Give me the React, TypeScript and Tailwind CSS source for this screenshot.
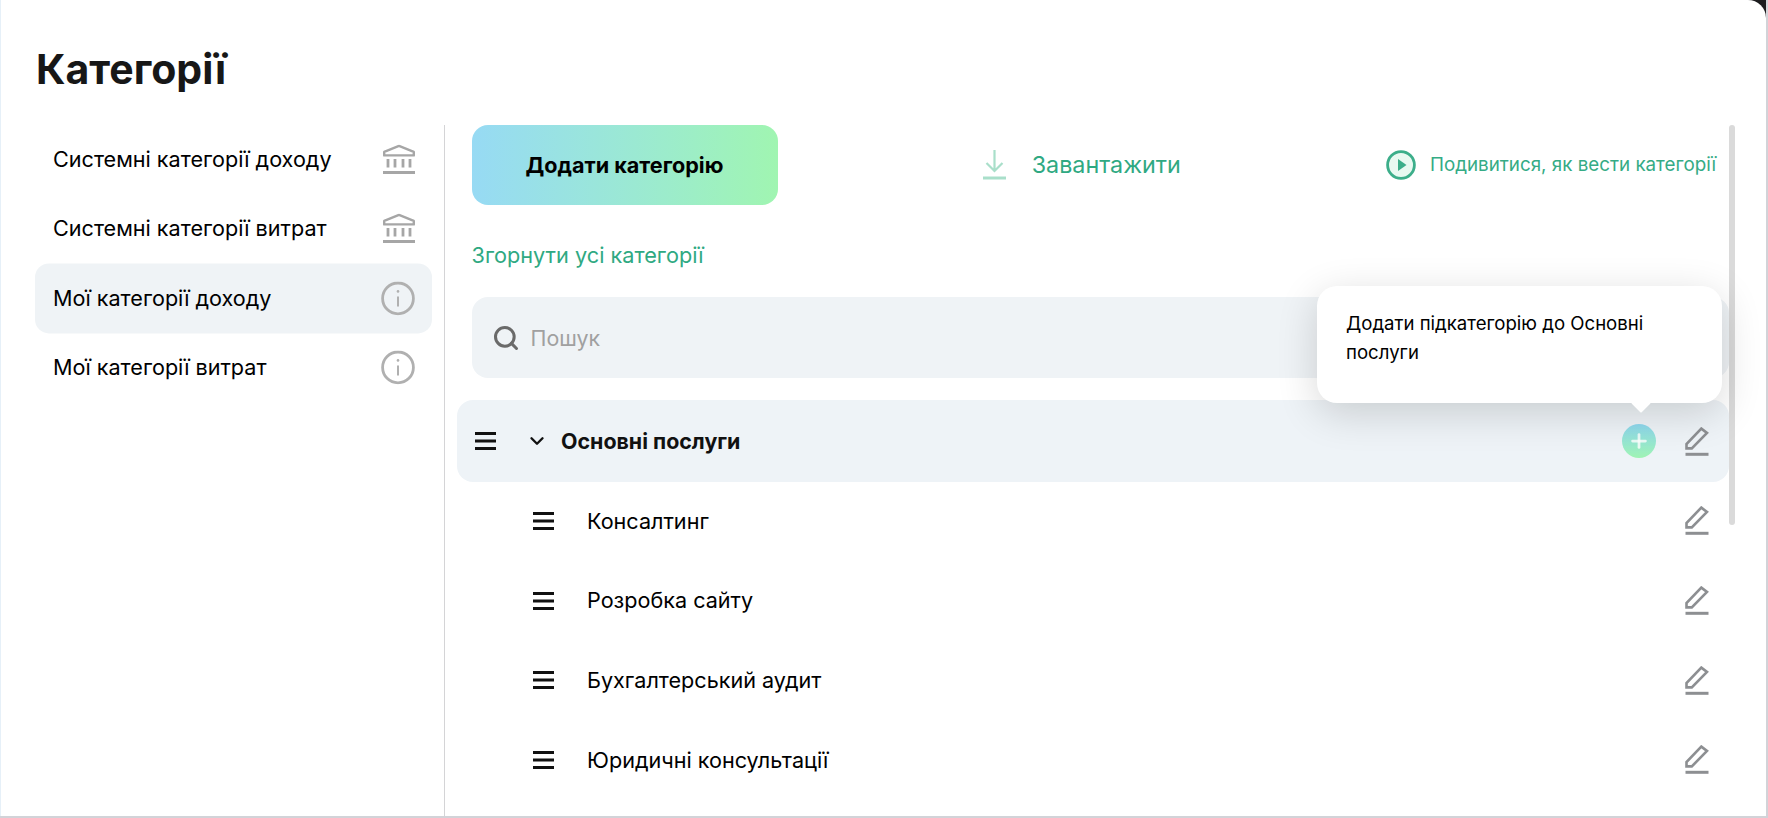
import { ChevronDown, Plus, Search } from "lucide-react";

const SIDEBAR_ITEMS: { label: string; icon: "bank" | "info"; active?: boolean }[] = [
  { label: "Системні категорії доходу", icon: "bank" },
  { label: "Системні категорії витрат", icon: "bank" },
  { label: "Мої категорії доходу", icon: "info", active: true },
  { label: "Мої категорії витрат", icon: "info" },
];

const SUBCATEGORIES = [
  "Консалтинг",
  "Розробка сайту",
  "Бухгалтерський аудит",
  "Юридичні консультації",
];

function BankIcon() {
  return (
    <svg width="32" height="30" viewBox="0 0 32 30" fill="none" stroke="#a6a6a6" className="shrink-0">
      <path d="M1.2 11V7.5L16 1.5L30.8 7.5V11H1.2Z" strokeWidth="2.4" strokeLinejoin="round" />
      <path d="M5 14.5V23M12 14.5V23M20 14.5V23M27 14.5V23" strokeWidth="2.8" />
      <path d="M0 28H32" strokeWidth="3" />
    </svg>
  );
}

function InfoIcon() {
  return (
    <svg width="34" height="34" viewBox="0 0 34 34" fill="none" stroke="#b0b0b0" className="shrink-0">
      <circle cx="17" cy="17" r="15.4" strokeWidth="2.8" />
      <path d="M17 15V25" strokeWidth="2" />
      <circle cx="17" cy="10" r="1.3" fill="#b0b0b0" stroke="none" />
    </svg>
  );
}

function DragIcon() {
  return (
    <svg width="21" height="18" viewBox="0 0 21 18" fill="#111111" className="shrink-0">
      <rect width="21" height="3" y="0" />
      <rect width="21" height="3" y="7.5" />
      <rect width="21" height="3" y="15" />
    </svg>
  );
}

function EditIcon() {
  return (
    <svg width="24" height="29" viewBox="0 0 24 29" fill="none" stroke="#8d8f92" className="shrink-0">
      <path d="M16.3 1.6L22 6L6.8 21.4H1.5V17L16.3 1.6Z" strokeWidth="2.6" />
      <path d="M0.5 27.3H23.5" strokeWidth="3" />
    </svg>
  );
}

function DownloadIcon() {
  return (
    <svg width="23" height="30" viewBox="0 0 23 30" fill="none" stroke="#a9dfca" className="shrink-0">
      <path d="M11.5 0V20M3.5 13L11.5 21L19.5 13" strokeWidth="2.2" />
      <path d="M0 28H23" strokeWidth="3" />
    </svg>
  );
}

function PlayIcon() {
  return (
    <svg width="30" height="30" viewBox="0 0 30 30" className="shrink-0">
      <circle cx="15" cy="15" r="13.4" fill="#e8f9f1" stroke="#3cae8a" strokeWidth="2.8" />
      <path d="M12 9L20.5 15L12 21Z" fill="#3cae8a" />
    </svg>
  );
}

export default function App() {
  return (
    <div className="flex h-screen w-full flex-col overflow-hidden border-r-2 border-b-2 border-[#d2d3d8] bg-[#1c1c1e] font-['Inter',sans-serif] text-black">
      <div className="flex min-h-0 flex-1 flex-col rounded-tr-[18px] border-l border-[#e6f0f8] bg-white">
        <h1 className="h-[125px] shrink-0 pt-[44px] pl-[35px] text-[41px] leading-[50px] font-bold text-[#171717]">
          Категорії
        </h1>

        <div className="flex min-h-0 flex-1">
          <aside className="mr-[12px] ml-[34px] w-[397px] shrink-0 -translate-y-[0.6px]">
            {SIDEBAR_ITEMS.map((item) => (
              <div
                key={item.label}
                className={`flex h-[69.5px] items-center justify-between rounded-[14px] pr-[17px] pl-[18px] text-[21.6px] ${
                  item.active ? "bg-[#eff3f6]" : ""
                }`}
              >
                <span>{item.label}</span>
                {item.icon === "bank" ? <BankIcon /> : <InfoIcon />}
              </div>
            ))}
          </aside>

          <div className="flex min-w-0 flex-1 border-l border-[#d4d4d6] pr-[31px]">
            <main className="relative min-w-0 flex-1">
              <div className="flex items-center justify-between pr-[13px] pl-[26.5px]">
                <button className="h-[80px] w-[306px] rounded-[16px] bg-gradient-to-r from-[#97daf4] to-[#a0f5b1] text-[21.6px] font-bold">
                  Додати категорію
                </button>
                <button className="flex items-center gap-[26px] text-[23.3px] text-[#2fa982]">
                  <DownloadIcon />
                  <span>Завантажити</span>
                </button>
                <button className="flex items-center gap-[14px] text-[18.8px] text-[#35ab85]">
                  <PlayIcon />
                  <span>Подивитися, як вести категорії</span>
                </button>
              </div>

              <div className="mt-[36px] mb-[28px] ml-[26.5px] text-[21.7px] leading-[28px] text-[#2fa982]">
                Згорнути усі категорії
              </div>

              <div className="ml-[26.5px] flex h-[81px] items-center gap-[11px] rounded-[16px] bg-[#eff3f6] pl-[20px]">
                <Search size={28} strokeWidth={2.6} className="shrink-0 text-[#6a6a6a]" />
                <input
                  placeholder="Пошук"
                  className="w-[300px] bg-transparent pt-[2px] text-[21.4px] outline-none placeholder:text-[#a0a0a0]"
                />
              </div>

              <div className="mt-[22px] ml-[12px] flex h-[82px] items-center rounded-[16px] bg-[#eef3f7] pr-[20px] pl-[18px]">
                <DragIcon />
                <ChevronDown size={22} strokeWidth={2.6} className="ml-[30px] shrink-0 text-[#111111]" />
                <span className="ml-[13px] flex-1 pt-[1px] text-[21.4px] font-bold text-[#111111]">Основні послуги</span>
                <div className="mr-[29px] flex h-[34px] w-[34px] items-center justify-center rounded-full bg-gradient-to-b from-[#8fd8ef] to-[#9ff3b3]">
                  <Plus size={22} strokeWidth={3} className="text-white/80" />
                </div>
                <EditIcon />
              </div>

              <div className="-mt-[1px]">
                {SUBCATEGORIES.map((name) => (
                  <div key={name} className="flex h-[79.7px] items-center pr-[20px] pl-[88px]">
                    <DragIcon />
                    <span className="ml-[33px] flex-1 text-[21.6px]">{name}</span>
                    <EditIcon />
                  </div>
                ))}
              </div>

              <div className="absolute top-[161px] left-[872px] h-[117px] w-[405px] rounded-[20px] bg-white px-[29px] pt-[23px] text-[18.6px] leading-[29px] shadow-[0_10px_40px_rgba(0,0,0,0.16)]">
                Додати підкатегорію до Основні послуги
                <div className="absolute top-[110px] left-[317px] h-[14px] w-[14px] rotate-45 rounded-[1px] bg-white" />
              </div>
            </main>
            <div className="h-[400px] w-[6px] shrink-0 rounded-[3px] bg-[#dadada]" />
          </div>
        </div>
      </div>
    </div>
  );
}
